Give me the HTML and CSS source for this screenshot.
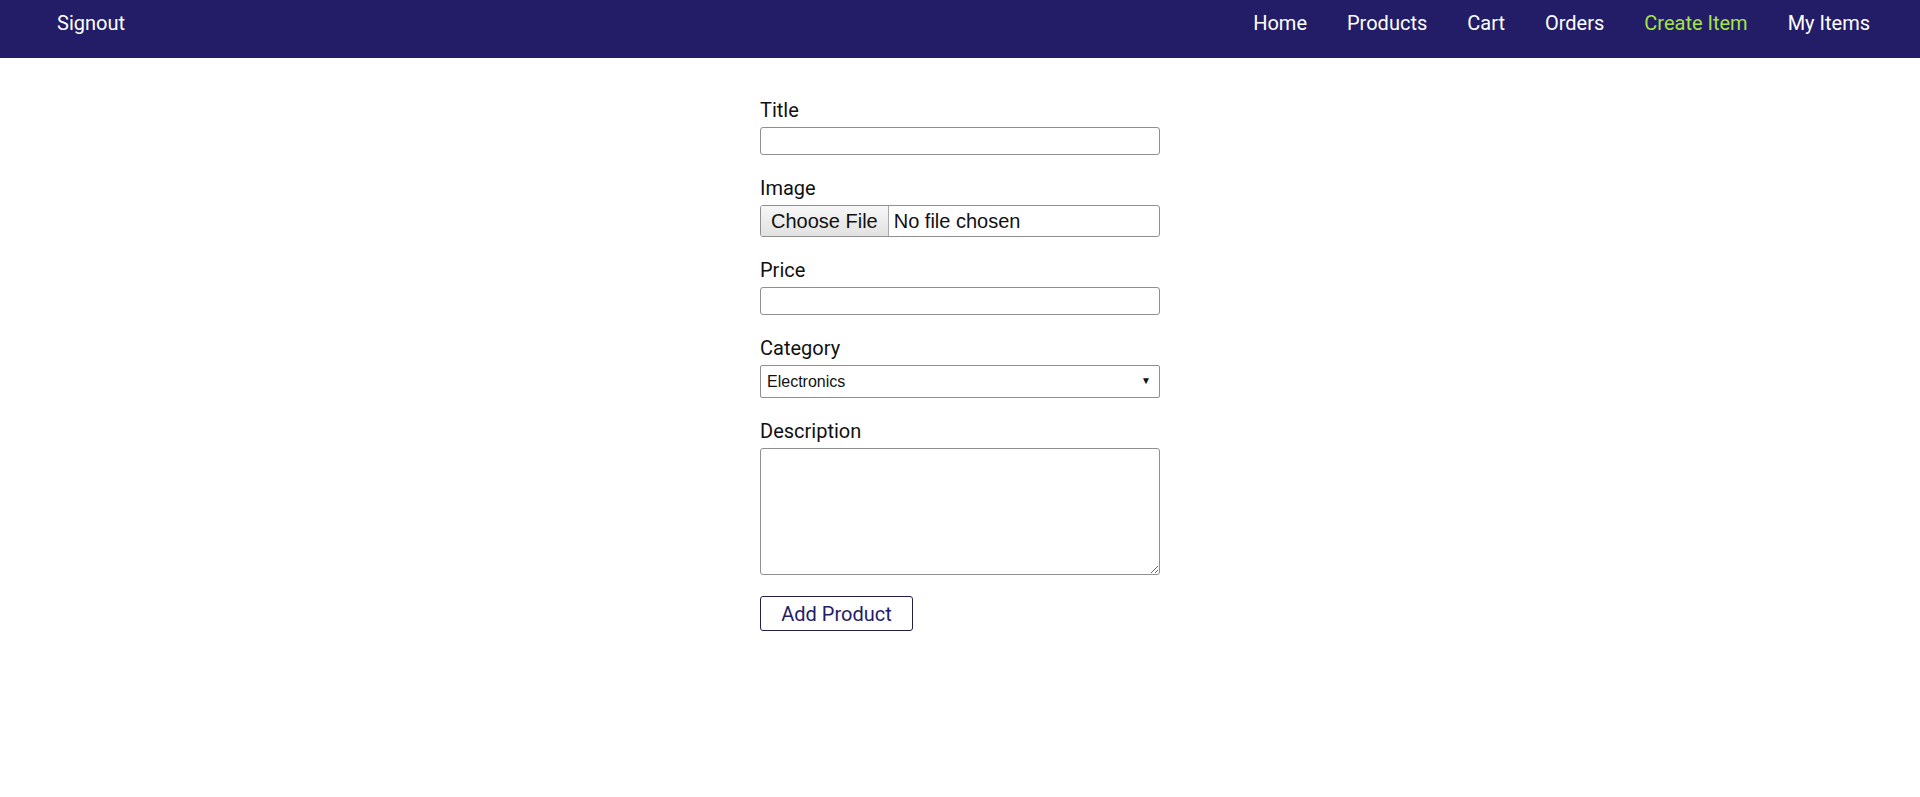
FILE: index.html
```html
<!DOCTYPE html>
<html lang="en">
<head>
<meta charset="utf-8">
<title>Create Item</title>
<link rel="stylesheet" href="styles.css">
</head>
<body>
<header class="navbar">
  <a class="nav-left" href="#">Signout</a>
  <ul class="nav-links">
    <li><a href="#">Home</a></li>
    <li><a href="#">Products</a></li>
    <li><a href="#">Cart</a></li>
    <li><a href="#">Orders</a></li>
    <li><a class="active" href="#">Create Item</a></li>
    <li><a href="#">My Items</a></li>
  </ul>
</header>
<main class="page">
  <form class="item-form">
    <div class="field">
      <label for="title">Title</label>
      <input id="title" class="text-input" type="text">
    </div>
    <div class="field">
      <label for="image">Image</label>
      <input id="image" class="file-input" type="file">
    </div>
    <div class="field">
      <label for="price">Price</label>
      <input id="price" class="text-input" type="text">
    </div>
    <div class="field">
      <label for="category">Category</label>
      <span class="select-wrap">
        <select id="category" class="select-input">
          <option>Electronics</option>
          <option>Clothing</option>
          <option>Books</option>
        </select>
      </span>
    </div>
    <div class="field field-last">
      <label for="description">Description</label>
      <textarea id="description" class="textarea-input"></textarea>
    </div>
    <div class="actions">
      <button type="button" class="submit-btn">Add Product</button>
    </div>
  </form>
</main>
</body>
</html>
```

FILE: styles.css
```css
* { box-sizing: border-box; }

body {
  margin: 0;
  font-family: Roboto, "Liberation Sans", sans-serif;
  background: #ffffff;
  color: #111111;
}

.navbar {
  height: 58px;
  background: #231d67;
  display: flex;
  justify-content: space-between;
  align-items: flex-start;
  padding: 12px 30px 0 57px;
}

.nav-left {
  color: #ffffff;
  text-decoration: none;
  font-size: 20px;
  line-height: 23px;
}

.nav-links {
  list-style: none;
  margin: 0;
  padding: 0;
  display: flex;
}

.nav-links li {
  padding: 0 20px;
}

.nav-links a {
  display: inline-block;
  color: #ffffff;
  text-decoration: none;
  font-size: 20px;
  line-height: 23px;
}

.nav-links a.active {
  color: #a5e445;
}

.page {
  display: flex;
  justify-content: center;
  padding-top: 41px;
}

.item-form {
  width: 400px;
  display: flex;
  flex-direction: column;
}

.field {
  display: flex;
  flex-direction: column;
  gap: 5px;
  margin-bottom: 22px;
}

.field-last {
  margin-bottom: 21px;
}

.field label {
  font-size: 20px;
  line-height: 23px;
  color: #111111;
}

.text-input {
  width: 400px;
  height: 28px;
  border: 1px solid #8f8f8f;
  border-radius: 3px;
  padding: 2px 6px;
  font: 16px "Liberation Sans", Arial, sans-serif;
}

.file-input {
  width: 400px;
  height: 32px;
  border: 1px solid #8f8f8f;
  border-radius: 3px;
  padding: 0;
  font: 20px "Liberation Sans", Arial, sans-serif;
  color: #111111;
}

.file-input::file-selector-button {
  height: 100%;
  margin: 0 5px 0 0;
  padding: 0 10px;
  border: 0;
  border-right: 1px solid #a8a8a8;
  background: linear-gradient(#f7f7f7, #e1e1e1);
  font: 20px "Liberation Sans", Arial, sans-serif;
  color: #111111;
}

.select-wrap {
  position: relative;
  display: block;
  width: 400px;
}

.select-wrap::after {
  content: "\25BC";
  position: absolute;
  right: 9px;
  top: 10px;
  font-size: 10px;
  line-height: 12px;
  color: #111111;
  pointer-events: none;
}

.select-input {
  appearance: none;
  -webkit-appearance: none;
  width: 400px;
  height: 33px;
  border: 1px solid #8f8f8f;
  border-radius: 2px;
  background: #ffffff;
  padding: 0 24px 0 6px;
  font: 16px "Liberation Sans", Arial, sans-serif;
  color: #111111;
}

.textarea-input {
  display: block;
  width: 400px;
  height: 127px;
  border: 1px solid #8f8f8f;
  border-radius: 3px;
  font: 16px "Liberation Sans", Arial, sans-serif;
}

.actions {
  display: flex;
}

.submit-btn {
  width: 153px;
  height: 35px;
  border: 1px solid #22204a;
  border-radius: 3px;
  background: #ffffff;
  color: #231d67;
  font: 20px Roboto, "Liberation Sans", sans-serif;
  padding: 0;
}
```
